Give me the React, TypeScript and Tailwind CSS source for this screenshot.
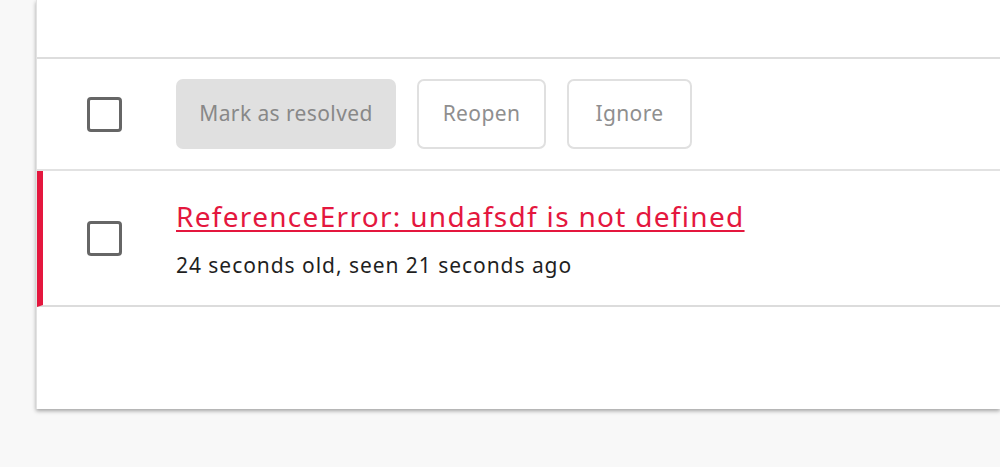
export default function App() {
  return (
    <div
      className="h-screen w-full overflow-hidden bg-[#f8f8f8] pl-[36px]"
      style={{ fontFamily: '"Noto Sans", "Open Sans", sans-serif' }}
    >
      <div className="border-l border-[#e2e2e2] bg-white shadow-[0_2px_4px_rgba(0,0,0,0.35)]">
        <div className="h-[59px] border-b-2 border-[#dddddd]" />

        <div className="flex h-[112px] items-center border-b-2 border-[#e2e2e2] pl-[50px]">
          <span className="h-[35px] w-[35px] shrink-0 rounded-[4px] border-[3px] border-[#666666]" />
          <div className="ml-[54px] flex items-center gap-[21px] text-[21px] tracking-[0.4px]">
            <button className="h-[70px] w-[220px] rounded-[7px] bg-[#e0e0e0] text-[#888888]">
              Mark as resolved
            </button>
            <button className="h-[70px] w-[129px] rounded-[7px] border-2 border-[#e0e0e0] bg-white text-[#8f8f8f]">
              Reopen
            </button>
            <button className="h-[70px] w-[125px] rounded-[7px] border-2 border-[#e0e0e0] bg-white text-[#8f8f8f]">
              Ignore
            </button>
          </div>
        </div>

        <div className="flex h-[136px] items-center border-b-2 border-l-[6px] border-b-[#dcdcdc] border-l-[#e4173e] pl-[44px]">
          <span className="h-[35px] w-[35px] shrink-0 rounded-[4px] border-[3px] border-[#666666]" />
          <div className="ml-[54px] flex flex-col">
            <a className="text-[28px] leading-[36px] tracking-[1.3px] text-[#e4173e] underline decoration-2 underline-offset-[3px]">
              ReferenceError: undafsdf is not defined
            </a>
            <p className="mt-[17px] text-[21px] leading-[28px] tracking-[0.95px] text-[#1f1f1f]">
              24 seconds old, seen 21 seconds ago
            </p>
          </div>
        </div>

        <div className="h-[102px]" />
      </div>
    </div>
  );
}
